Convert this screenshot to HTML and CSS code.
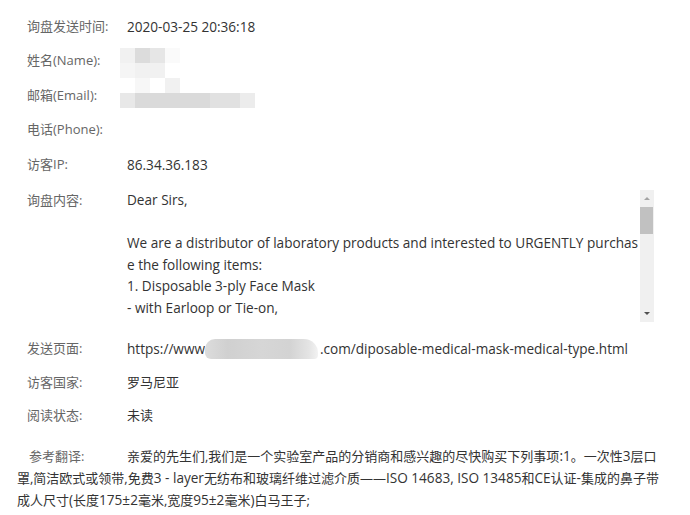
FILE: index.html
```html
<!DOCTYPE html>
<html lang="zh-CN">
<head>
<meta charset="utf-8">
<title>询盘详情</title>
<link rel="stylesheet" href="styles.css">
</head>
<body>
<div class="page">
  <div class="row"><div class="label">询盘发送时间:</div><div class="value latin">2020-03-25 20:36:18</div></div>
  <div class="row"><div class="label">姓名(Name):</div><div class="value"></div></div>
  <div class="row"><div class="label">邮箱(Email):</div><div class="value"></div></div>
  <div class="row"><div class="label">电话(Phone):</div><div class="value"></div></div>
  <div class="row"><div class="label">访客IP:</div><div class="value latin">86.34.36.183</div></div>
  <div class="row row-content">
    <div class="label">询盘内容:</div>
    <div class="msgbox">
      <div class="msgtext latin">
        <div>Dear Sirs,</div>
        <div>&nbsp;</div>
        <div>We are a distributor of laboratory products and interested to URGENTLY purchas</div>
        <div>e the following items:</div>
        <div>1. Disposable 3-ply Face Mask</div>
        <div>- with Earloop or Tie-on,</div>
      </div>
      <div class="scrollbar">
        <div class="arrow arrow-up"></div>
        <div class="track"><div class="thumb"></div></div>
        <div class="arrow arrow-down"></div>
      </div>
    </div>
  </div>
  <div class="row row-url"><div class="label">发送页面:</div><div class="value latin">https://www<span class="blur"></span>.com/diposable-medical-mask-medical-type.html</div></div>
  <div class="row row-country"><div class="label">访客国家:</div><div class="value">罗马尼亚</div></div>
  <div class="row row-read"><div class="label">阅读状态:</div><div class="value">未读</div></div>
  <div class="translate"><span class="tlabel">参考翻译:</span>亲爱的先生们,我们是一个实验室产品的分销商和感兴趣的尽快购买下列事项<span class="lt">:1</span>。一次性<span class="lt">3</span>层口<br>罩,简洁欧式或领带,免费<span class="lt">3 - layer</span>无纺布和玻璃纤维过滤介质——<span class="lt">ISO 14683, ISO 13485</span>和<span class="lt">CE</span>认证<span class="lt">-</span>集成的鼻子带<br>成人尺寸<span class="lt">(</span>长度<span class="lt">175±2</span>毫米,宽度<span class="lt">95±2</span>毫米<span class="lt">)</span>白马王子;</div>

  <div class="mosaic">
    <i class="m1"></i><i class="m2"></i><i class="m3"></i><i class="m4"></i><i></i><i></i><i></i><i></i><i></i>
    <i class="m5"></i><i class="m6"></i><i class="m6"></i><i></i><i></i><i></i><i></i><i></i><i></i>
    <i></i><i class="m7"></i><i></i><i class="m6"></i><i></i><i></i><i></i><i></i><i></i>
    <i class="m8"></i><i class="m9"></i><i class="m9"></i><i class="m9"></i><i class="m9"></i><i class="m9"></i><i class="m10"></i><i class="m10"></i><i class="m11"></i>
  </div>
</div>
</body>
</html>
```
FILE: styles.css
```css
html, body {
  margin: 0;
  padding: 0;
  background: #fff;
}
.page {
  position: relative;
  width: 690px;
  height: 515px;
  overflow: hidden;
  padding-top: 15.5px;
  box-sizing: border-box;
  font-family: "Open Sans", "Noto Sans CJK SC", sans-serif;
  font-size: 13px;
  color: #333;
}
.row {
  display: flex;
  padding-left: 27px;
  line-height: 21px;
  height: 21px;
  margin-bottom: 13.5px;
}
.label {
  width: 100px;
  flex: none;
  color: #666;
}
.value {
  color: #333;
  white-space: nowrap;
}
.latin {
  font-size: 13.6px;
}
.row-content {
  height: auto;
  margin-top: 15px;
  margin-bottom: 16px;
}
.msgbox {
  display: flex;
  width: 527px;
  height: 132px;
}
.msgtext {
  flex: 1;
  line-height: 21.5px;
  margin-top: -0.5px;
  white-space: nowrap;
}
.scrollbar {
  width: 14px;
  flex: none;
  display: flex;
  flex-direction: column;
  background: #f0f0f0;
}
.arrow {
  height: 17px;
  flex: none;
  display: flex;
  align-items: center;
  justify-content: center;
}
.arrow::before {
  content: "";
  border-left: 3.5px solid transparent;
  border-right: 3.5px solid transparent;
}
.arrow-up::before {
  border-bottom: 3.5px solid #a3a3a3;
}
.arrow-down::before {
  border-top: 3.5px solid #505050;
}
.track {
  flex: 1;
  padding: 0 1px 0 0;
}
.thumb {
  height: 27px;
  background: #c1c1c1;
}
.row-url {
  margin-bottom: 13px;
}
.row-country {
  margin-bottom: 12px;
}
.row-read {
  margin-bottom: 19px;
}
.blur {
  display: inline-block;
  vertical-align: -5px;
  width: 113px;
  height: 20px;
  border-radius: 10px 14px 4px 6px;
  background: linear-gradient(90deg, #dcdcdc 0%, #d0d0d0 20%, #d6d6d6 50%, #d3d3d3 75%, #e4e4e4 92%, #f2f2f2 100%);
  margin-right: 2px;
}
.translate {
  padding-left: 17px;
  line-height: 21px;
  color: #333;
  white-space: nowrap;
}
.lt {
  font-size: 13.6px;
}
.tlabel {
  display: inline-block;
  width: 98px;
  padding-left: 12px;
  color: #666;
}
.mosaic {
  position: absolute;
  left: 120px;
  top: 48px;
  display: grid;
  grid-template-columns: repeat(9, 15px);
  grid-template-rows: repeat(4, 15px);
}
.mosaic i { display: block; }
.mosaic .m1 { background: #f1f1f1; }
.mosaic .m2 { background: #dcdcdc; }
.mosaic .m3 { background: #e6e6e6; }
.mosaic .m4 { background: #fafafa; }
.mosaic .m5 { background: #f5f5f5; }
.mosaic .m6 { background: #f1f1f1; }
.mosaic .m7 { background: #f7f7f7; }
.mosaic .m8 { background: #e8e8e8; }
.mosaic .m9 { background: #dadada; }
.mosaic .m10 { background: #e1e1e1; }
.mosaic .m11 { background: #ececec; }
```
